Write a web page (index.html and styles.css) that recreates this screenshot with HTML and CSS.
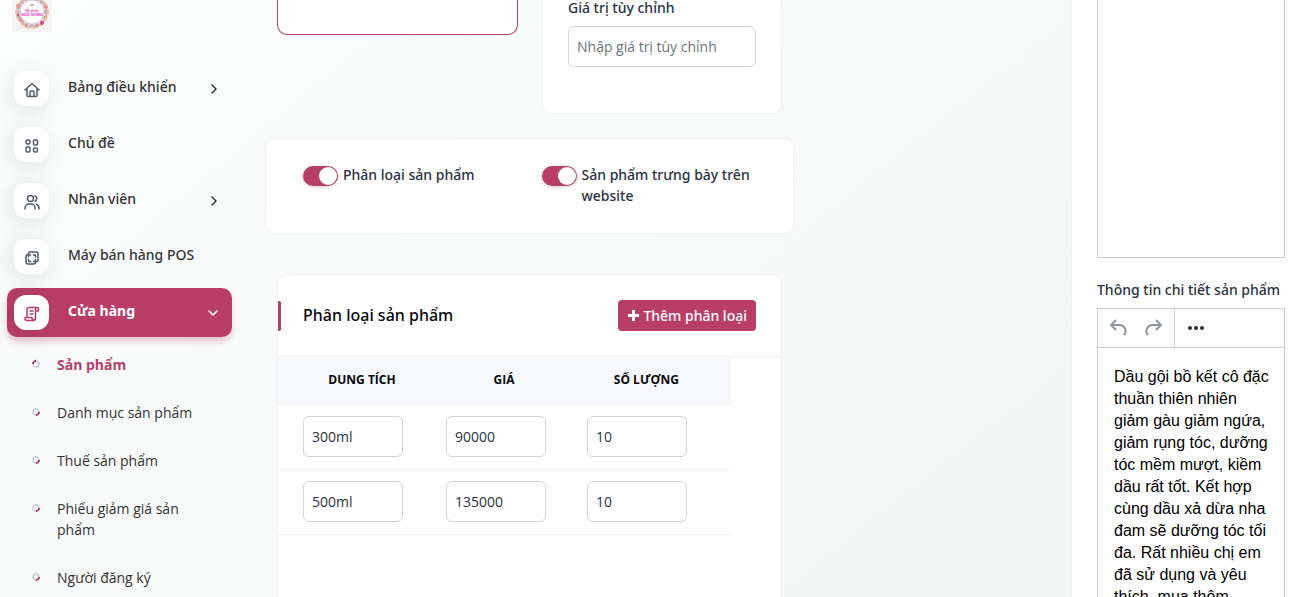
FILE: index.html
```html
<!DOCTYPE html>
<html lang="vi">
<head>
  <meta charset="UTF-8" />
  <meta name="viewport" content="width=device-width, initial-scale=1.0" />
  <title>Sản phẩm</title>
  <link rel="stylesheet" href="styles.css">
</head>
<body>
  <div class="page">
    <nav class="sidebar">
      <a class="logo" href="#" aria-label="Mỹ phẩm Ngọc Hương">
        <svg width="40" height="40" viewBox="0 0 40 40">
          <rect width="40" height="40" fill="#f5f4f4"/>
          <g fill="none" stroke-linecap="round">
            <circle cx="20" cy="20" r="14.5" stroke="#d9b3ae" stroke-width="3" stroke-dasharray="1 3"/>
            <circle cx="20" cy="20" r="16" stroke="#e6c9a8" stroke-width="2" stroke-dasharray="2 5"/>
            <circle cx="20" cy="20" r="13" stroke="#c8a6c0" stroke-width="2" stroke-dasharray="1 4"/>
          </g>
          <g fill="#dc9a96">
            <circle cx="6" cy="14" r="2"/><circle cx="34" cy="15" r="2"/><circle cx="9" cy="28" r="2"/>
            <circle cx="14" cy="34" r="1.500"/><circle cx="25" cy="34" r="1.500"/>
          </g>
          <circle cx="30" cy="31" r="2" fill="#c84b80"/>
          <circle cx="34" cy="25" r="1.500" fill="#e2b36f"/>
          <circle cx="6" cy="23" r="1.500" fill="#ad7183"/>
          <circle cx="20" cy="20" r="12" fill="#fff" stroke="#cfc6dc"/>
          <path d="M18 13h4" stroke="#b05a8c"/>
          <text x="20" y="20" class="logo-text">Mỹ phẩm</text>
          <text x="20" y="24" class="logo-text logo-name">NGỌC HƯƠNG</text>
        </svg>
      </a>

      <ul class="menu">
        <li>
          <a class="menu-link" href="#">
            <span class="menu-icon">
              <svg width="16" height="16" viewBox="0 0 16 16"><path d="M1 8 8 1.500 15 8M3 6.500V13.500a1 1 0 0 0 1 1h8a1 1 0 0 0 1-1V6.500M6 14.500V10a1 1 0 0 1 1-1h2a1 1 0 0 1 1 1v4.500"/></svg>
            </span>
            <span class="menu-text">Bảng điều khiển</span>
            <svg class="arrow" width="10" height="10" viewBox="0 0 10 10"><path d="m3 1 4 4-4 4"/></svg>
          </a>
        </li>
        <li>
          <a class="menu-link" href="#">
            <span class="menu-icon">
              <svg width="16" height="16" viewBox="0 0 16 16"><rect x="2" y="2" width="4" height="4" rx="1.500"/><rect x="9.500" y="2" width="4" height="5" rx="1"/><rect x="2" y="9" width="4" height="5" rx="1"/><rect x="9.500" y="10" width="4" height="4" rx="1.500"/></svg>
            </span>
            <span class="menu-text">Chủ đề</span>
          </a>
        </li>
        <li>
          <a class="menu-link" href="#">
            <span class="menu-icon">
              <svg width="16" height="16" viewBox="0 0 16 16"><circle cx="6.500" cy="4.500" r="3"/><path d="M1 15v-1a4 4 0 0 1 4-4h2a4 4 0 0 1 4 4v1M11 1.800a3 3 0 0 1 0 5.400M12.500 10.200a4 4 0 0 1 2.500 3.800v1"/></svg>
            </span>
            <span class="menu-text">Nhân viên</span>
            <svg class="arrow" width="10" height="10" viewBox="0 0 10 10"><path d="m3 1 4 4-4 4"/></svg>
          </a>
        </li>
        <li>
          <a class="menu-link" href="#">
            <span class="menu-icon">
              <svg width="16" height="16" viewBox="0 0 16 16"><path d="M4.500 4V3a1 1 0 0 1 1-1h7a1.500 1.500 0 0 1 1.500 1.500v7a1 1 0 0 1-1 1h-1M3.500 4.500h1M2 6v6a2 2 0 0 0 2 2h6a2 2 0 0 0 1.500-1.500M2 6a2 2 0 0 1 2-1.500M4.500 7V5h2M9.500 5h2v2M11.500 9.500v2h-2M6.500 11.500h-2v-2"/></svg>
            </span>
            <span class="menu-text">Máy bán hàng POS</span>
          </a>
        </li>
        <li>
          <a class="menu-link active" href="#">
            <span class="menu-icon">
              <svg width="16" height="16" viewBox="0 0 16 16"><path d="M3 11.500V3.500a2 2 0 0 1 2-2h8M12 5h2.500V3a1.500 1.500 0 0 0-3 0v9.500a2 2 0 0 1-2 2H3a2 2 0 0 1-2-2v-1h7v1a1.500 1.500 0 0 0 3 0M6 5h3M6 8h3"/></svg>
            </span>
            <span class="menu-text">Cửa hàng</span>
            <svg class="arrow" width="12" height="12" viewBox="0 0 12 12"><path d="m2 4 4 4 4-4"/></svg>
          </a>
          <ul class="submenu">
            <li><a class="current" href="#">Sản phẩm</a></li>
            <li><a href="#">Danh mục sản phẩm</a></li>
            <li><a href="#">Thuế sản phẩm</a></li>
            <li><a href="#">Phiếu giảm giá sản phẩm</a></li>
            <li><a href="#">Người đăng ký</a></li>
          </ul>
        </li>
      </ul>
    </nav>

    <main class="content">
      <div class="top-row">
        <div class="card image-box"></div>
        <div class="card custom-box">
          <label for="customValue">Giá trị tùy chỉnh</label>
          <input class="field" type="text" id="customValue" placeholder="Nhập giá trị tùy chỉnh" />
        </div>
      </div>

      <div class="card switches">
        <div class="switch">
          <input type="checkbox" id="enableVariant" checked />
          <label for="enableVariant">Phân loại sản phẩm</label>
        </div>
        <div class="switch">
          <input type="checkbox" id="showOnSite" checked />
          <label for="showOnSite">Sản phẩm trưng bày trên website</label>
        </div>
      </div>

      <section class="card variants">
        <div class="variants-header">
          <h5>Phân loại sản phẩm</h5>
          <button type="button" class="btn">
            <svg width="13" height="13" viewBox="0 0 13 13"><path d="M6.500 1v11M1 6.500h11"/></svg>
            Thêm phân loại
          </button>
        </div>
        <table>
          <thead>
            <tr><th class="col-size">Dung tích</th><th class="col-price">Giá</th><th>Số lượng</th></tr>
          </thead>
          <tbody>
            <tr>
              <td><input class="field" type="text" value="300ml" aria-label="Dung tích" /></td>
              <td><input class="field" type="text" value="90000" aria-label="Giá" /></td>
              <td><input class="field" type="text" value="10" aria-label="Số lượng" /></td>
            </tr>
            <tr>
              <td><input class="field" type="text" value="500ml" aria-label="Dung tích" /></td>
              <td><input class="field" type="text" value="135000" aria-label="Giá" /></td>
              <td><input class="field" type="text" value="10" aria-label="Số lượng" /></td>
            </tr>
          </tbody>
        </table>
      </section>
    </main>

    <aside class="details">
      <textarea class="description" aria-label="Mô tả sản phẩm"></textarea>
      <div class="details-label" id="detailsLabel">Thông tin chi tiết sản phẩm</div>
      <div class="editor">
        <div class="toolbar">
          <div class="tool-group">
            <button type="button" aria-label="Hoàn tác">
              <svg width="18" height="18" viewBox="0 0 18 18"><path d="M7 1 2 6l5 5M2 6h8a6 6 0 0 1 5 10"/></svg>
            </button>
            <button type="button" aria-label="Làm lại">
              <svg width="18" height="18" viewBox="0 0 18 18"><path d="m11 1 5 5-5 5M16 6H8a6 6 0 0 0-5 10"/></svg>
            </button>
          </div>
          <button type="button" class="more" aria-label="Thêm">
            <svg width="18" height="18" viewBox="0 0 18 18"><circle cx="3" cy="9" r="2"/><circle cx="9" cy="9" r="2"/><circle cx="15" cy="9" r="2"/></svg>
          </button>
        </div>
        <div class="editor-body" contenteditable="true" role="textbox" aria-labelledby="detailsLabel" spellcheck="false">Dầu gội bồ kết cô đặc thuần thiên nhiên giảm gàu giảm ngứa, giảm rụng tóc, dưỡng tóc mềm mượt, kiềm dầu rất tốt. Kết hợp cùng dầu xả dừa nha đam sẽ dưỡng tóc tối đa. Rất nhiều chị em đã sử dụng và yêu thích, mua thêm</div>
      </div>
    </aside>
  </div>
</body>
</html>
```
FILE: styles.css
```css
*, *::before {
  box-sizing: border-box;
}
body {
  margin: 0;
  font-family: 'Open Sans', 'Noto Sans', sans-serif;
  font-size: 14px;
  line-height: 21px;
  color: #293240;
  background: linear-gradient(141deg, #fbfcfc 3%, #f2f5f4 100%);
}
ul {
  list-style: none;
  margin: 0;
  padding: 0;
}
a {
  color: inherit;
  text-decoration: none;
}
button, input, textarea {
  font: inherit;
}
.page {
  display: grid;
  grid-template-columns: 240px minmax(0, 1fr) 228px;
  height: 100vh;
  overflow: hidden;
}
.menu-link, label, h5, .btn, .details-label {
  font-family: 'Noto Sans', 'Open Sans', sans-serif;
  font-weight: 500;
}

/* Sidebar */
.sidebar {
  padding: 0 8px 0 7px;
  color: #333;
}
.logo {
  display: flex;
  align-items: flex-end;
  height: 32px;
  margin: 0 5px 32px;
}
.logo-text {
  font-size: 3px;
  font-weight: 600;
  text-anchor: middle;
  fill: #e01fb4;
}
.logo-name {
  font-weight: 700;
}
.menu-link {
  display: flex;
  align-items: center;
  height: 49px;
  margin-bottom: 7px;
  padding: 0 13px 0 7px;
  border-radius: 10px;
}
.menu-icon {
  display: flex;
  align-items: center;
  justify-content: center;
  width: 35px;
  height: 35px;
  margin-right: 19px;
  padding-top: 2px;
  border-radius: 12px;
  background: #fff;
  box-shadow: -3px 4px 23px rgba(0, 0, 0, 0.1);
}
.menu-icon svg, .arrow {
  fill: none;
  stroke: #525b69;
  stroke-width: 1.5;
  stroke-linecap: round;
  stroke-linejoin: round;
}
.menu-text {
  flex: 1;
  padding-bottom: 4px;
}
.arrow {
  stroke: #333;
}
.active {
  background: #b83e68;
  color: #fff;
  font-weight: 700;
  box-shadow: 0 5px 7px -1px rgba(184, 62, 104, 0.3);
}
.active .menu-icon svg {
  stroke: #b83e68;
}
.active .arrow {
  stroke: #fff;
}
.submenu {
  margin-top: -3px;
}
.submenu a {
  display: flex;
  gap: 17px;
  padding: 13px 24px 14px 25px;
}
.submenu a::before {
  content: "";
  flex: none;
  width: 8px;
  height: 8px;
  margin-top: 6px;
  border: 2px solid #ced4da;
  border-radius: 50%;
  border-right-color: #b83e68;
  transform: rotate(45deg);
}
.submenu .current {
  color: #b83e68;
  font-weight: 700;
}
.submenu .current::before {
  border-color: #ced4da;
  border-left-color: #b83e68;
}

/* Product form */
.content {
  display: flex;
  flex-direction: column;
  max-width: 554px;
  padding-left: 25px;
}
.card {
  background: #fff;
  border: 1px solid #f0f1f1;
  border-radius: 10px;
}
.field {
  display: block;
  width: 100%;
  height: 41px;
  padding: 0 8px;
  border: 1px solid #ced4da;
  border-radius: 6px;
  background: #fff;
  color: #293240;
}
.field::placeholder {
  color: #6c757d;
  opacity: 1;
}
.top-row {
  display: grid;
  grid-template-columns: minmax(0, 1fr) 240px;
  gap: 24px;
  align-items: start;
  margin: 0 12px 24px;
}
.image-box, .custom-box {
  border-top: 0;
  border-radius: 0 0 10px 10px;
}
.image-box {
  height: 35px;
  border-color: #b83e68;
}
.custom-box {
  padding: 0 25px 46px;
}
.custom-box label {
  display: block;
  margin-bottom: 10px;
  line-height: 16px;
}
.switches {
  display: grid;
  grid-template-columns: 1fr 1fr;
  gap: 24px;
  margin-bottom: 40px;
  padding: 25px 37px 27px;
}
.switch {
  display: flex;
  align-items: flex-start;
  gap: 5px;
}
.switch input {
  appearance: none;
  flex: none;
  display: flex;
  justify-content: flex-end;
  width: 35px;
  height: 20px;
  margin: 2px 0 0;
  padding: 1px;
  border-radius: 10px;
  background: #b83e68;
  box-shadow: 0 1px 4px rgba(0, 0, 0, 0.2);
}
.switch input::before {
  content: "";
  width: 18px;
  height: 18px;
  border-radius: 50%;
  background: #fff;
}
.switch input:not(:checked) {
  justify-content: flex-start;
  background: #ced4da;
}
.variants {
  flex: 1;
  margin: 0 12px;
  border-bottom: 0;
  border-radius: 10px 10px 0 0;
}
.variants-header {
  position: relative;
  display: flex;
  align-items: center;
  justify-content: space-between;
  padding: 25px 25px 25px;
  border-bottom: 1px solid #f1f1f1;
}
.variants-header::before {
  content: "";
  position: absolute;
  left: 0;
  width: 3px;
  height: 30px;
  border-radius: 0 2px 2px 0;
  background: #b83e68;
}
h5 {
  margin: 0;
  font-size: 16px;
  color: #060606;
}
.btn {
  display: flex;
  align-items: center;
  gap: 3px;
  height: 31px;
  padding: 0 9px;
  border: 0;
  border-radius: 4px;
  background: #b83e68;
  color: #fff;
}
.btn svg {
  stroke: #fff;
  stroke-width: 3;
}
table {
  width: 90%;
  table-layout: fixed;
  border-collapse: separate;
  border-spacing: 0;
}
th, td {
  padding: 11px 0 12px 25px;
  border-bottom: 1px solid #f1f1f1;
}
th {
  padding-top: 12px;
  padding-bottom: 14px;
  background: #f8f9fd;
  color: #060606;
  font-size: 12px;
  font-weight: 700;
  text-transform: uppercase;
}
.col-size {
  width: 143px;
}
.col-price {
  width: 141px;
}
th:last-child {
  padding-right: 25px;
}
td .field {
  width: 100px;
}

/* Description column */
.details {
  display: flex;
  flex-direction: column;
  padding: 0 14px 0 25px;
  background: #fff;
  border-left: 1px solid #f1f1f1;
}
.description {
  flex: none;
  display: block;
  width: 100%;
  height: 258px;
  border: 1px solid #ccc;
  border-top: 0;
  resize: none;
}
.details-label {
  margin: 21px 0 8px;
  white-space: nowrap;
}
.editor {
  flex: 1;
  border: 1px solid #ccc;
  border-bottom: 0;
}
.toolbar {
  display: flex;
  height: 39px;
  border-bottom: 1px solid #ccc;
}
.tool-group {
  display: flex;
  padding: 0 2px;
  border-right: 1px solid #ccc;
}
.toolbar button {
  display: flex;
  align-items: center;
  justify-content: center;
  width: 36px;
  padding: 0;
  border: 0;
  background: none;
}
.tool-group svg {
  fill: none;
  stroke: #90959d;
  stroke-width: 2;
}
.more {
  margin-left: 3px;
}
.more svg {
  fill: #222f3e;
}
.editor-body {
  padding: 18px 14px 18px 16px;
  font-family: 'Liberation Sans', Arial, sans-serif;
  font-size: 16px;
  line-height: 22px;
  color: #000;
  outline: none;
}
```
